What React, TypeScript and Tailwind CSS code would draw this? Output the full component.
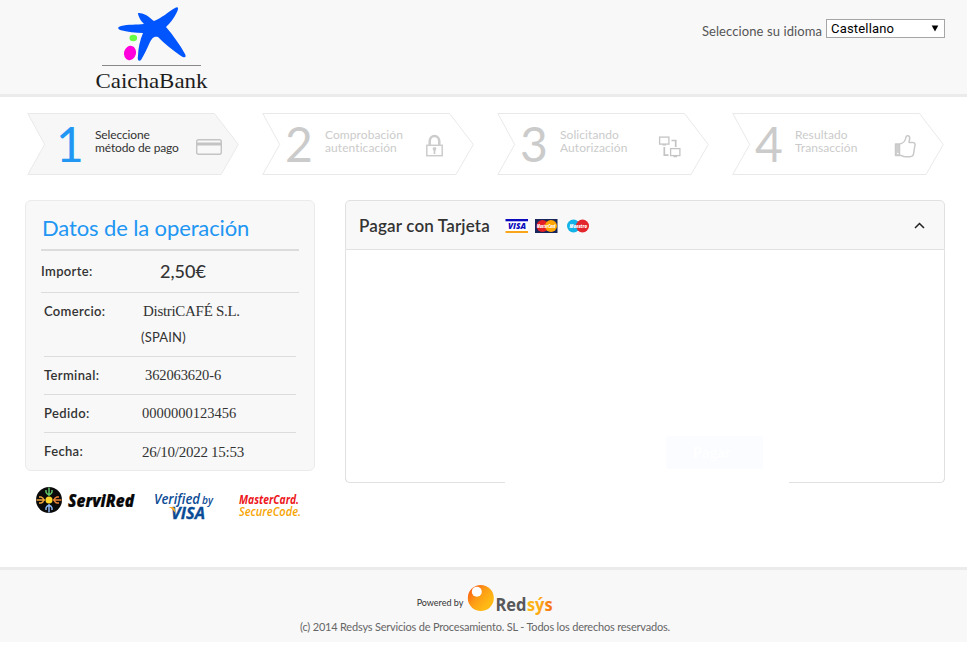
import React from "react";

const lato = "font-['Lato','Open_Sans',sans-serif]";
const serif = "font-['Liberation_Serif',serif]";

function BankLogo() {
  return (
    <svg className="h-[94px] w-[130px]" viewBox="86 0 130 94">
      <path
        fill="#0055ff"
        d="M138 14 C137 12 142 13 146 15 C150 17 152 20 154 21 C162 18 168 12 175 8 C178 6 179 8 177 12 C174 18 171 22 166 27 C173 35 180 45 185 54 C187 58 184 58 181 56 C172 50 164 43 158 37 C153 36 152 39 150 42 C147 49 144 55 141 60 C139 62 137 60 138 56 C138 49 140 40 143 33 C136 33 127 32 120 30 C117 28 118 27 121 26 C128 24 137 25 144 24 C141 21 139 18 138 14 Z"
      />
      <ellipse cx="133.300" cy="38" rx="3.800" ry="3.200" fill="#66ff44" />
      <ellipse cx="130" cy="53" rx="6" ry="7.200" fill="#ff00dd" transform="rotate(15 130 53)" />
      <rect x="102" y="65" width="99" height="1" fill="#888" />
      <text x="95.500" y="87.500" fontFamily="Liberation Serif, serif" fontSize="22" textLength="112" lengthAdjust="spacingAndGlyphs" fill="#1d1d1d">
        CaichaBank
      </text>
    </svg>
  );
}

function CardIcon() {
  return (
    <g>
      <rect x="169.700" y="26.700" width="24.600" height="14.600" rx="2" fill="#f8f8f8" stroke="#c4c4c4" strokeWidth="1.400" />
      <rect x="170" y="29.500" width="24" height="3" fill="#c4c4c4" />
    </g>
  );
}

function LockIcon() {
  return (
    <g fill="none" stroke="#cccccc">
      <path d="M167.700 32 V28.500 A4.800 5.500 0 0 1 177.300 28.500 V32" strokeWidth="2.500" />
      <rect x="164.800" y="32.300" width="15.400" height="10.400" strokeWidth="1.500" />
      <circle cx="172.500" cy="35.800" r="1.900" fill="#cccccc" stroke="none" />
      <path d="M172.500 36 V41" strokeWidth="1.700" />
    </g>
  );
}

function LinkIcon() {
  return (
    <g fill="none" stroke="#c4c4c4" strokeWidth="1.300">
      <rect x="162.600" y="24.100" width="9.300" height="7" />
      <rect x="173.600" y="35.600" width="9.300" height="7" />
      <path d="M165.500 31.800 H169 M176.500 43.500 H180" />
      <path d="M174.500 27.500 H178.700 V34 M167.300 34 V42.200 H171.500" strokeWidth="1.700" />
    </g>
  );
}

function ThumbIcon() {
  return (
    <g stroke="#c9c9c9" strokeWidth="1.500" strokeLinejoin="round" fill="none">
      <path d="M163.500 31 H167.500 V42.500 H163.500 Z" fill="#cfcfcf" />
      <path d="M167.500 31 C171 30.500 173.500 27.500 174 24 C174.400 21.800 178 22.300 177.700 25.500 L177 29.500 H181 C183.200 29.500 183.400 31.500 182.800 33 L181.500 41 C181.200 43 180 43.700 178 43.700 H173 C171 43.700 170 42.500 167.500 42.200" />
      <circle cx="165.800" cy="40.500" r=".8" fill="#fff" stroke="none" />
    </g>
  );
}

const steps = [
  { n: "1", a: "Seleccione", b: "método de pago", icon: <CardIcon />, active: true },
  { n: "2", a: "Comprobación", b: "autenticación", icon: <LockIcon />, active: false },
  { n: "3", a: "Solicitando", b: "Autorización", icon: <LinkIcon />, active: false },
  { n: "4", a: "Resultado", b: "Transacción", icon: <ThumbIcon />, active: false },
];

function Steps() {
  return (
    <ol className="flex h-[64px] gap-[23px] pl-[27px]">
      {steps.map((s) => (
        <li key={s.n} className="grid h-[64px] w-[212px] shrink-0">
          <svg className="col-start-1 row-start-1 h-[64px] w-[212px]" viewBox="0 0 212 64">
            <path d="M.8 .5 H187.500 L211.300 31.500 L194 61.500 H.8 L17.700 31.500 Z" fill={s.active ? "#f7f7f7" : "#fff"} stroke="#e9e9e9" />
            {s.icon}
          </svg>
          <div className={s.active ? "col-start-1 row-start-1 flex pl-[29px] text-[#333]" : "col-start-1 row-start-1 flex pl-[23px] text-[#cbcbcb]"}>
            <span className={s.active ? "w-[39px] text-[48px] leading-[62px] text-[#2196f3]" : "w-[40px] text-[48px] leading-[62px]"}>{s.n}</span>
            <span className={s.active ? "pt-[15px] text-[12px] leading-[13px] tracking-[-0.130px]" : "pt-[15px] text-[12px] leading-[13px] tracking-[0.080px]"}>
              {s.a}
              <br />
              {s.b}
            </span>
          </div>
        </li>
      ))}
    </ol>
  );
}

const label = "font-semibold tracking-[0.350px]";

function OperationData() {
  return (
    <section className="h-[271px] w-[290px] rounded-[6px] border border-[#ebebeb] bg-[#f8f8f8] pl-[15px] text-[13px] text-[#333]">
      <h2 className="h-[50px] w-[258px] border-b-2 border-[#dcdcdc] pt-[12px] pl-px text-[22px] leading-[30px] tracking-[-0.120px] whitespace-nowrap text-[#2196f3]">Datos de la operación</h2>
      <div className="flex h-[42px] w-[258px] items-center border-b border-[#dcdcdc]">
        <span className={`${label} w-[119px]`}>Importe:</span>
        <span className="text-[18px] font-medium">2,50€</span>
      </div>
      <div className="ml-[3px] w-[252px]">
        <div className="h-[64px] border-b border-[#dcdcdc]">
          <div className="flex h-[36px] items-center pt-px">
            <span className={`${label} w-[99px]`}>Comercio:</span>
            <span className={`${serif} text-[15px] tracking-[-0.300px]`}>DistriCAFÉ S.L.</span>
          </div>
          <p className="pl-[97px] leading-[16px] tracking-[0.200px]">(SPAIN)</p>
        </div>
        <div className="flex h-[38px] items-center border-b border-[#dcdcdc]">
          <span className={`${label} w-[101px]`}>Terminal:</span>
          <span className={`${serif} text-[14.500px] tracking-[-0.120px]`}>362063620-6</span>
        </div>
        <div className="flex h-[38px] items-center border-b border-[#dcdcdc]">
          <span className={`${label} w-[98px]`}>Pedido:</span>
          <span className={`${serif} text-[14.500px]`}>0000000123456</span>
        </div>
        <div className="flex h-[38px] items-center">
          <span className={`${label} w-[98px]`}>Fecha:</span>
          <span className={`${serif} text-[15px] tracking-[-0.270px]`}>26/10/2022 15:53</span>
        </div>
      </div>
    </section>
  );
}

function SecurityLogos() {
  return (
    <svg className="mt-[9px] block h-[50px] w-[290px]" viewBox="25 480 290 50">
      <circle cx="49" cy="500" r="13" fill="#0b0b0b" />
      {[
        { a: 0, c: "#62c26b" },
        { a: 90, c: "#ee8438" },
        { a: 180, c: "#8cb4f0" },
        { a: 270, c: "#f0a33c" },
      ].map((r) => (
        <g key={r.a} transform={`rotate(${r.a} 49 500)`} fill="none" stroke={r.c} strokeWidth="1.500">
          <path d="M49 496 V487.500 M46 490 V492 Q46.500 494 49 495 Q51.500 494 52 492 V490" />
        </g>
      ))}
      <circle cx="49" cy="500" r="3.500" fill="#ffd52b" />
      <g fontFamily="Open Sans, sans-serif" fontStyle="italic">
        <text x="68" y="507" fontSize="18" fontWeight="800" textLength="66" lengthAdjust="spacingAndGlyphs" fill="#080808" stroke="#080808" strokeWidth=".2">ServiRed</text>
        <text x="154" y="504" fontSize="13.500" fontWeight="600" textLength="46" lengthAdjust="spacingAndGlyphs" fill="#0b4b95">Verified</text>
        <text x="202" y="504" fontSize="11" fontWeight="600" textLength="11" lengthAdjust="spacingAndGlyphs" fill="#0b4b95">by</text>
        <text x="171" y="519" fontSize="16.500" fontWeight="700" textLength="34" lengthAdjust="spacingAndGlyphs" fill="#0b4b95" stroke="#0b4b95" strokeWidth=".3">VISA</text>
        <path d="M168.500 507 H173 Q175.500 508 175.500 513 Q173 509 168.500 507 Z" fill="#f9a825" />
        <text x="239" y="504" fontSize="12.500" fontWeight="700" textLength="60" lengthAdjust="spacingAndGlyphs" fill="#ed1620">MasterCard.</text>
        <text x="239" y="515.500" fontSize="12.500" fontWeight="600" textLength="62" lengthAdjust="spacingAndGlyphs" fill="#f7a300">SecureCode.</text>
      </g>
    </svg>
  );
}

function CardLogos() {
  return (
    <svg className="ml-[15px] h-[14px] w-[86px]" viewBox="505 220 86 14">
      <rect x="505.500" y="220" width="22.500" height="14" fill="#fff" />
      <rect x="505.500" y="220" width="22.500" height="2.300" fill="#0b0bbd" />
      <rect x="505.500" y="232" width="22.500" height="2" fill="#f9a51a" />
      <rect x="535" y="220" width="22.500" height="14" fill="#19265c" />
      <circle cx="542.500" cy="227" r="6" fill="#e51f26" />
      <circle cx="551" cy="227" r="6" fill="#ffa400" />
      <circle cx="573.500" cy="227" r="6.500" fill="#13b2e7" />
      <circle cx="582.500" cy="227" r="6.500" fill="#e3262b" />
      <g fontFamily="Open Sans, sans-serif" fontStyle="italic" fontWeight="800">
        <text x="508" y="230.300" fontSize="8.500" textLength="18" lengthAdjust="spacingAndGlyphs" fill="#0b0bbd">VISA</text>
        <text x="537" y="228.800" fontSize="5" textLength="18.500" lengthAdjust="spacingAndGlyphs" fill="#fff">MasterCard</text>
        <text x="569.500" y="229" fontSize="5.500" textLength="17.500" lengthAdjust="spacingAndGlyphs" fill="#fff">Maestro</text>
      </g>
    </svg>
  );
}

function CardPayment() {
  return (
    <section className="flex h-[283px] w-[600px] flex-col">
      <header className="flex h-[50px] items-center rounded-t-[5px] border border-[#e1e1e1] bg-[#f8f8f8] pt-[2px] pr-[18px] pl-[13px]">
        <h2 className="w-[131px] text-[17px] leading-[24px] font-semibold tracking-[0.160px] whitespace-nowrap text-[#333]">Pagar con Tarjeta</h2>
        <CardLogos />
        <svg className="ml-auto h-[12px] w-[13px]" viewBox="0 0 13 12">
          <path d="M2 8 L6.500 3.500 L11 8" fill="none" stroke="#222" strokeWidth="1.500" />
        </svg>
      </header>
      <div className="flex grow flex-col rounded-b-[5px] border-x border-[#e1e1e1]">
        <div className="mt-[186px] ml-[320px] h-[33px] w-[97px] rounded-[3px] bg-[#fafcff] pl-[27px] text-[15px] leading-[33px] font-bold text-white">Pagar</div>
        <div className="mt-auto -mx-px flex justify-between">
          <i className="h-[5px] w-[160px] rounded-bl-[5px] border-b border-l border-[#e1e1e1]" />
          <i className="h-[5px] w-[156px] rounded-br-[5px] border-r border-b border-[#e1e1e1]" />
        </div>
      </div>
    </section>
  );
}

function RedsysLogo() {
  return (
    <svg className="h-[36px] w-[90px]" viewBox="466 582 90 36">
      <defs>
        <linearGradient id="orb" x1="0" y1="0.200" x2="0.700" y2="0.800">
          <stop offset="0" stopColor="#fb5a12" />
          <stop offset=".5" stopColor="#fd9b16" />
          <stop offset="1" stopColor="#ffb914" />
        </linearGradient>
        <linearGradient id="sys" x1="0" x2="1">
          <stop offset="0" stopColor="#ffba12" />
          <stop offset=".55" stopColor="#fca615" />
          <stop offset="1" stopColor="#f76b12" />
        </linearGradient>
      </defs>
      <circle cx="480.800" cy="598" r="13" fill="url(#orb)" />
      <circle cx="476.800" cy="591.800" r="5" fill="#fff" />
      <g fontFamily="Open Sans, sans-serif" fontWeight="700" fontSize="17">
        <text x="495.500" y="611" textLength="31" lengthAdjust="spacingAndGlyphs" fill="#58585a">Red</text>
        <text x="527" y="611" textLength="25.500" lengthAdjust="spacingAndGlyphs" fill="url(#sys)">sýs</text>
      </g>
    </svg>
  );
}

export default function App() {
  return (
    <div className={`${lato} flex h-[661px] w-[967px] flex-col overflow-hidden bg-white`}>
      <header className="flex h-[97px] shrink-0 justify-between border-b-[3px] border-[#ebebeb] bg-[#f8f8f8] pr-[22px] pl-[86px]">
        <BankLogo />
        <label className="mt-[19px] flex h-[19px] items-start gap-[4px] text-[13px] text-[#555]">
          <span className="pt-[3px] leading-[19px] tracking-[0.090px]">Seleccione su idioma</span>
          <span className="flex h-[19px] w-[119px] items-center justify-between border border-[#a6a6a6] bg-white pr-[5px] pl-[4px] font-['Roboto',sans-serif] text-[13px] tracking-[0.180px] text-black">
            Castellano
            <svg className="h-[7px] w-[8px]" viewBox="0 0 8 7">
              <path d="M.7 .5 H7.300 L4 6.500 Z" fill="#000" />
            </svg>
          </span>
        </label>
      </header>
      <main className="h-[470px] shrink-0 pt-[16px]">
        <Steps />
        <div className="mt-[23px] flex gap-[30px] pl-[25px]">
          <div>
            <OperationData />
            <SecurityLogos />
          </div>
          <CardPayment />
        </div>
      </main>
      <footer className="flex h-[75px] shrink-0 flex-col items-center border-t-[3px] border-[#ebebeb] bg-[#f8f8f8] pt-[12px] text-[#666]">
        <div className="flex h-[36px] items-center gap-[3px] pl-[6px]">
          <span className="pt-[5px] text-[9px] text-[#333]">Powered by</span>
          <RedsysLogo />
        </div>
        <p className="pl-[3px] text-[11px] leading-[18px] tracking-[-0.200px] whitespace-nowrap">(c) 2014 Redsys Servicios de Procesamiento. SL - Todos los derechos reservados.</p>
      </footer>
    </div>
  );
}
